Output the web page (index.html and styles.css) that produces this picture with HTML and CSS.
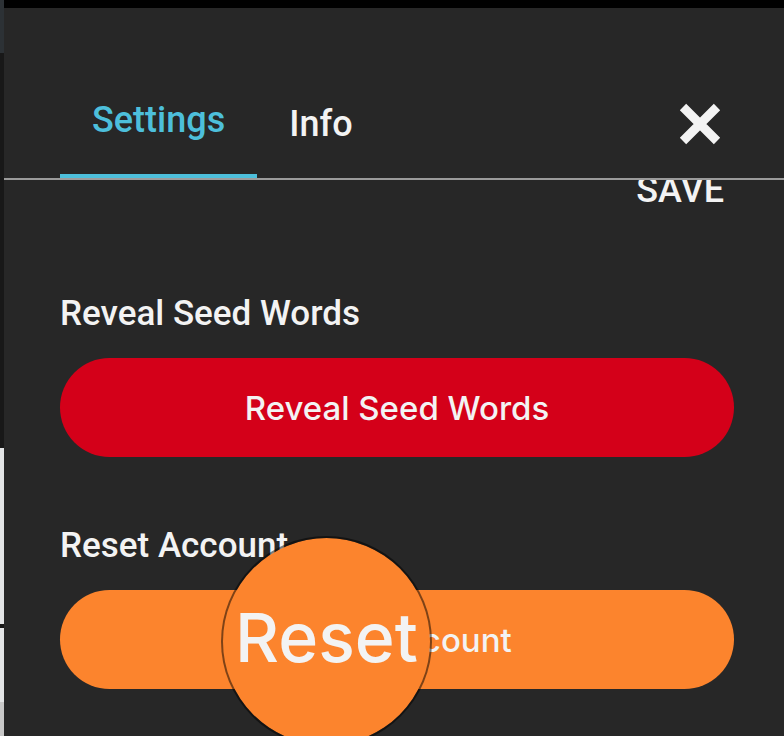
FILE: index.html
```html
<!DOCTYPE html>
<html lang="en">
<head>
<meta charset="utf-8">
<meta name="viewport" content="width=device-width, initial-scale=1">
<title>Settings</title>
<link rel="stylesheet" href="styles.css">
</head>
<body>
<div class="page">
  <div class="backdrop"></div>
  <main class="panel">
    <header class="header">
      <nav class="tabs">
        <a class="tab tab-active" href="#settings">Settings</a>
        <a class="tab" href="#info">Info</a>
      </nav>
      <button class="close" type="button" aria-label="Close">
        <svg width="42" height="42" viewBox="0 0 42 42" aria-hidden="true"><path d="M4 4L38 38M38 4L4 38" stroke="currentColor" stroke-width="9" fill="none"/></svg>
      </button>
    </header>
    <div class="content" id="settings">
      <a class="save" href="#save">SAVE</a>
      <section class="row">
        <h2 class="label">Reveal Seed Words</h2>
        <button class="button button-danger" type="button">Reveal Seed Words</button>
      </section>
      <section class="row">
        <h2 class="label">Reset Account</h2>
        <button class="button button-warning" type="button">Reset Account</button>
        <div class="lens">Reset</div>
      </section>
    </div>
  </main>
</div>
</body>
</html>
```
FILE: styles.css
```css
* {
  box-sizing: border-box;
}

body {
  margin: 0;
  background: #272727;
  color: #f3f3f3;
  font-family: Roboto, "Liberation Sans", sans-serif;
  font-size: 36px;
  font-weight: 500;
  line-height: 44px;
}

.page {
  display: flex;
  height: 100vh;
  overflow: hidden;
}

.backdrop {
  flex: 0 0 4px;
  background: linear-gradient(#2c3135 53px, #181818 53px 448px, #e3e5e6 448px 624px, #181818 624px 628px, #e3e5e6 628px 702px, #c8c8c8 702px);
}

.panel {
  flex: 1;
  min-width: 0;
  display: flex;
  flex-direction: column;
  border-top: 8px solid #000;
}

.header {
  display: flex;
  justify-content: space-between;
  align-items: flex-end;
  padding: 90px 63px 0 56px;
  border-bottom: 2px solid #9b9b9b;
}

.tabs {
  display: flex;
  align-items: flex-end;
}

.tab {
  padding: 0 32px 32px;
  color: inherit;
  text-decoration: none;
}

.tab-active {
  color: #4dbfdb;
  border-bottom: 4px solid #4dbfdb;
}

.close {
  display: flex;
  margin: 0 0 33px;
  padding: 0;
  border: 0;
  background: none;
  color: inherit;
}

.content {
  flex: 1;
  min-height: 0;
  overflow: hidden;
  display: flex;
  flex-direction: column;
  padding: 0 50px 0 56px;
}

.save {
  align-self: flex-end;
  margin: -12px 10px 80px 0;
  color: inherit;
  text-decoration: none;
}

.row {
  position: relative;
  margin-bottom: 67px;
}

.label {
  margin: 0 0 22px;
  font-size: 35px;
  font-weight: 500;
}

.button {
  display: block;
  width: 100%;
  height: 99px;
  border: 0;
  border-radius: 50px;
  color: inherit;
  font-family: Inter, "Liberation Sans", sans-serif;
  font-size: 33px;
  font-weight: 500;
}

.button-danger {
  background: #d40019;
}

.button-warning {
  background: #fc842d;
}

.lens {
  position: absolute;
  top: 12px;
  left: calc(50% - 176px);
  width: 211px;
  height: 211px;
  display: flex;
  align-items: center;
  justify-content: center;
  padding-bottom: 10px;
  border: 2px solid rgba(0, 0, 0, 0.5);
  border-radius: 50%;
  background: #fc842d padding-box;
  font-family: Inter, "Liberation Sans", sans-serif;
  font-size: 68px;
}
```
